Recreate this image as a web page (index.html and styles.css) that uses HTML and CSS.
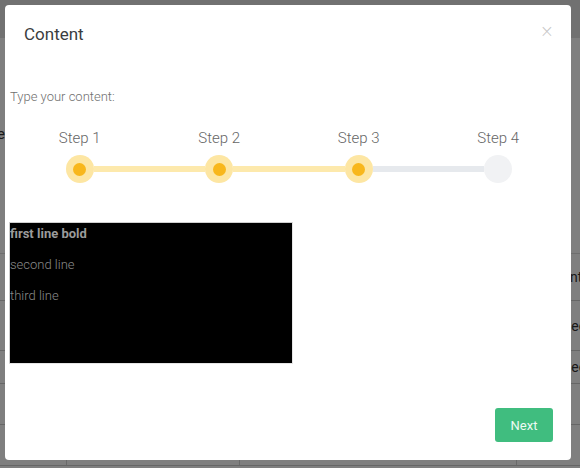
FILE: index.html
```html
<!DOCTYPE html>
<html>
<head>
<meta charset="utf-8">
<link rel="stylesheet" href="styles.css">
</head>
<body>
<div class="page">
  <div class="topbar"></div>
  <div class="intro"><span>Some page title here</span></div>
  <div class="table">
    <div class="row r1"><div class="c c1"></div><div class="c c2"></div><div class="c c3"></div><div class="c c4 p1">Content</div></div>
    <div class="row r2"><div class="c c1"></div><div class="c c2"></div><div class="c c3"></div><div class="c c4 p2">Second</div></div>
    <div class="row r3"><div class="c c1"></div><div class="c c2"></div><div class="c c3"></div><div class="c c4 p2">Second</div></div>
    <div class="row r4"><div class="c c1"></div><div class="c c2"></div><div class="c c3"></div><div class="c c4"></div></div>
    <div class="row r5"><div class="c c1"></div><div class="c c2"></div><div class="c c3"></div><div class="c c4"></div></div>
  </div>
</div>
<div class="overlay"></div>
<div class="modal">
  <div class="modal-header">
    <div class="title">Content</div>
    <div class="close">×</div>
  </div>
  <div class="modal-body">
    <div class="prompt">Type your content:</div>
    <div class="step-labels">
      <div class="label">Step 1</div>
      <div class="label">Step 2</div>
      <div class="label">Step 3</div>
      <div class="label">Step 4</div>
    </div>
    <div class="track">
      <div class="dot done"><span class="core"></span></div>
      <div class="bar done"></div>
      <div class="dot done"><span class="core"></span></div>
      <div class="bar done"></div>
      <div class="dot done"><span class="core"></span></div>
      <div class="bar"></div>
      <div class="dot"></div>
    </div>
    <div class="editor">
      <p class="bold">first line bold</p>
      <p>second line</p>
      <p>third line</p>
    </div>
  </div>
  <div class="modal-footer">
    <button class="next">Next</button>
  </div>
</div>
</body>
</html>
```
FILE: styles.css
```css
html, body {
  margin: 0;
  padding: 0;
}
body {
  background: #fff;
  font-family: Roboto, "Liberation Sans", sans-serif;
  width: 580px;
  height: 468px;
  overflow: hidden;
}
.page {
  width: 580px;
  height: 468px;
}
.topbar {
  height: 38px;
  background: #e2e2e2;
}
.intro {
  margin-top: 86px;
  width: 5px;
  display: flex;
  justify-content: flex-end;
  white-space: nowrap;
  font-size: 15px;
  line-height: 20px;
  color: #333;
}
.intro span {
  flex: none;
}
.table {
  margin-top: 109px;
  border-top: 1px solid #ddd;
}
.row {
  display: flex;
  border-bottom: 1px solid #ccc;
}
.r1 { height: 46px; }
.r2 { height: 49px; }
.r3 { height: 32px; }
.r4 { height: 40px; }
.r5 { height: 40px; }
.c {
  border-right: 1px solid #d4d4d4;
  font-size: 14px;
  color: #333;
  display: flex;
  align-items: center;
  flex: none;
}
.c1 { width: 66px; }
.c2 { width: 172px; }
.c3 { width: 276px; }
.c4 {
  flex: 1 1 0;
  min-width: 0;
  border-right: none;
  white-space: nowrap;
}
.p1 { padding-left: 36px; }
.p2 { padding-left: 46px; }

.overlay {
  position: fixed;
  inset: 0;
  background: rgba(0, 0, 0, 0.5);
}
.modal {
  position: fixed;
  left: 5px;
  top: 5px;
  width: 566px;
  height: 455px;
  background: #fff;
  border-radius: 4px;
  display: flex;
  flex-direction: column;
}
.modal-header {
  display: flex;
  justify-content: space-between;
  align-items: flex-start;
  padding: 18px 17px 25px 19px;
}
.title {
  font-size: 17px;
  line-height: 22px;
  color: #3a3d40;
}
.close {
  font-size: 17px;
  line-height: 17px;
  color: #c6c6c6;
  font-family: "DejaVu Sans", sans-serif;
  font-weight: 300;
}
.modal-body {
  padding: 18px 3px 0 5px;
}
.prompt {
  font-size: 13px;
  line-height: 18px;
  font-weight: 300;
  color: #6f6f6f;
}
.step-labels {
  margin-top: 22px;
  display: grid;
  grid-template-columns: repeat(4, 139.5px);
}
.label {
  text-align: center;
  font-size: 15px;
  line-height: 20px;
  font-weight: 300;
  color: #666;
}
.track {
  margin-top: 7px;
  display: flex;
  align-items: center;
  padding-left: 55.75px;
  height: 28px;
}
.dot {
  width: 28px;
  height: 28px;
  border-radius: 50%;
  background: #f1f2f4;
  display: flex;
  align-items: center;
  justify-content: center;
  flex: none;
}
.dot.done {
  background: #fde6a3;
}
.core {
  width: 13px;
  height: 13px;
  border-radius: 50%;
  background: #f8b71c;
}
.bar {
  width: 111.5px;
  height: 6px;
  background: #e6e9ed;
  flex: none;
}
.bar.done {
  background: #fde9ac;
}
.editor {
  margin-top: 39px;
  margin-left: -1px;
  width: 282px;
  height: 140px;
  background: #000;
  border: 1px solid #cfcfcf;
  border-right-color: #e5e5e5;
  border-bottom-color: #e5e5e5;
}
.editor p {
  margin: 0 0 9px 0;
  font-size: 13px;
  line-height: 22px;
  font-weight: 300;
  color: #8b8b8b;
}
.editor p.bold {
  font-weight: 700;
  color: #9b9b9b;
}
.modal-footer {
  margin-top: auto;
  display: flex;
  justify-content: flex-end;
  padding: 0 18px 18px 0;
}
.next {
  width: 58px;
  height: 34px;
  border: none;
  border-radius: 3px;
  background: #40bd7f;
  color: #eefaf3;
  font-family: Roboto, "Liberation Sans", sans-serif;
  font-size: 13px;
  padding: 0;
}
```
